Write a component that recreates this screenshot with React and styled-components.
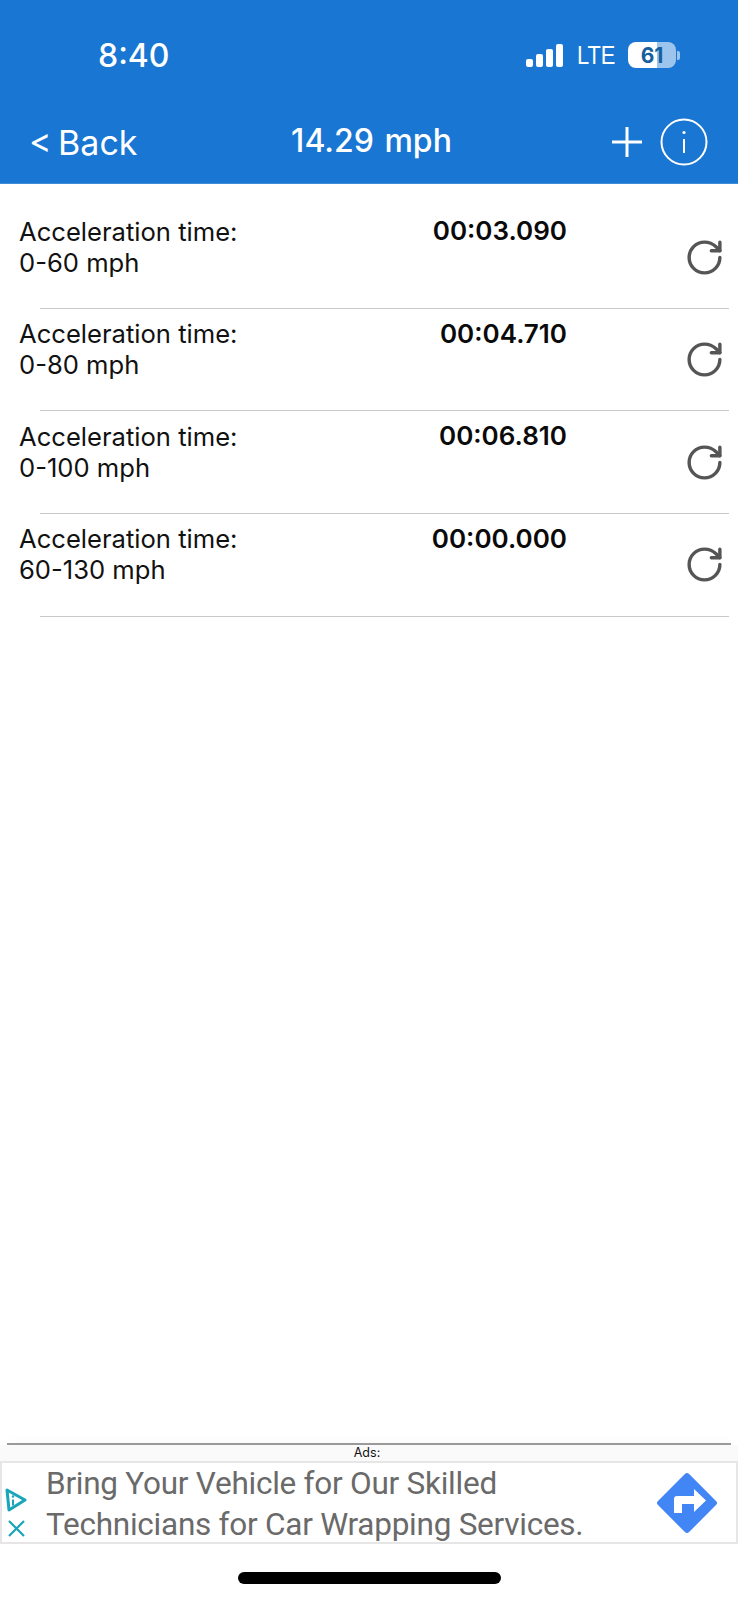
import React from 'react';
import styled, { createGlobalStyle } from 'styled-components';
import { RotateCw } from 'lucide-react';

const GlobalStyle = createGlobalStyle`
  html, body {
    margin: 0;
    padding: 0;
    background: #fff;
  }
  * {
    box-sizing: border-box;
  }
`;

const Page = styled.div`
  width: 738px;
  height: 1600px;
  display: flex;
  flex-direction: column;
  font-family: Inter, "Liberation Sans", sans-serif;
  background: #fff;
  overflow: hidden;
`;

const Header = styled.header`
  height: 184px;
  background: #1976d3;
  color: #fff;
  border-bottom: 1px solid #3c8ed8;
  flex-shrink: 0;
`;

const StatusBar = styled.div`
  height: 110px;
  padding: 0 58px 0 98px;
  display: flex;
  align-items: center;
  justify-content: space-between;
`;

const Time = styled.span`
  font-size: 32px;
  font-weight: 500;
`;

const StatusIcons = styled.div`
  display: flex;
  align-items: center;
`;

const SignalBars = styled.div`
  display: flex;
  align-items: flex-end;
  gap: 3px;
  height: 23px;
  margin-right: 14px;
`;

const SignalBar = styled.span`
  width: 7px;
  height: ${(p) => p.$h}px;
  background: #fff;
  border-radius: 2px;
`;

const Network = styled.span`
  font-family: "Liberation Sans", sans-serif;
  font-size: 26px;
  transform: scaleX(0.84);
  transform-origin: left center;
  width: 51px;
`;

const Battery = styled.div`
  width: 48px;
  height: 26px;
  border-radius: 8px;
  display: flex;
  align-items: center;
  justify-content: center;
  color: #14609f;
  font-size: 21px;
  font-weight: 700;
  background: linear-gradient(
    to right,
    #fff ${(p) => p.$level}%,
    #9cc4ec ${(p) => p.$level}%
  );
`;

const BatteryNub = styled.span`
  width: 3px;
  height: 9px;
  margin-left: 1px;
  background: #9cc4ec;
  border-radius: 0 2px 2px 0;
`;

const NavBar = styled.nav`
  height: 73px;
  padding: 0 30px 10px 29px;
  display: grid;
  grid-template-columns: 1fr auto 1fr;
  align-items: center;
`;

const BackLink = styled.span`
  font-size: 34px;
  font-weight: 400;
  word-spacing: -3px;
  margin-top: 2px;
`;

const Title = styled.span`
  font-size: 32px;
  font-weight: 500;
  word-spacing: 2px;
  margin-left: 6px;
  margin-top: -2px;
`;

const NavActions = styled.div`
  display: flex;
  align-items: center;
  justify-content: flex-end;
  gap: 17px;
`;

const List = styled.main`
  padding-top: 22px;
`;

const Row = styled.section`
  height: 101.67px;
  display: grid;
  grid-template-columns: 290px 258px 1fr;
  padding-left: 19px;
  padding-right: 13px;
`;

const Label = styled.div`
  font-size: 25.6px;
  line-height: 31px;
  color: #111;
  padding-top: 9.5px;
  white-space: nowrap;
`;

const Value = styled.div`
  font-size: 26px;
  line-height: 31px;
  font-weight: 600;
  color: #0a0a0a;
  text-align: right;
  padding-top: 9px;
`;

const ResetButton = styled.div`
  display: flex;
  justify-content: flex-end;
  padding-top: 30.5px;
  color: #555;
`;

const Divider = styled.div`
  height: 1px;
  margin: 0 9px 0 40px;
  background: #c8c8c8;
`;

const AdSection = styled.footer`
  margin-top: auto;
  flex-shrink: 0;
`;

const AdRule = styled.div`
  height: 2px;
  margin: 0 7px;
  background: #9a9a9a;
  box-shadow: 0 -2px 10px rgba(0, 0, 0, 0.07);
`;

const AdCaption = styled.div`
  height: 16px;
  font-size: 12.5px;
  line-height: 16px;
  text-align: center;
  color: #111;
  padding-right: 4px;
  background: #fafafa;
`;

const AdBox = styled.div`
  height: 83px;
  display: flex;
  align-items: center;
  border: 2px solid #e6e6e6;
  background: #fff;
`;

const AdMarks = styled.div`
  width: 44px;
  align-self: stretch;
  display: flex;
  flex-direction: column;
  align-items: center;
  justify-content: flex-end;
  gap: 8px;
  padding: 0 16px 5px 0;
  flex-shrink: 0;
`;

const AdText = styled.div`
  flex: 1;
  font-family: Roboto, sans-serif;
  font-size: 31.5px;
  font-weight: 400;
  letter-spacing: -0.25px;
  line-height: 41px;
  padding-top: 2px;
  color: #6a6a6a;
  white-space: nowrap;
`;

const AdAction = styled.div`
  width: 81px;
  display: flex;
  flex-shrink: 0;
`;

const HomeArea = styled.div`
  height: 56px;
  display: flex;
  justify-content: center;
  padding-top: 28px;
`;

const HomeBar = styled.div`
  width: 263px;
  height: 12px;
  border-radius: 6px;
  background: #000;
`;

const PlusIcon = () => (
  <svg width="32" height="32" viewBox="0 0 32 32">
    <path d="M1 16h30M16 1v30" stroke="#fff" strokeWidth="3" fill="none" />
  </svg>
);

const InfoIcon = () => (
  <svg width="48" height="48" viewBox="0 0 48 48" fill="none">
    <circle cx="24" cy="24" r="22.5" stroke="#fff" strokeWidth="2" />
    <path d="M24 21v14" stroke="#fff" strokeWidth="2" />
    <circle cx="24" cy="14.5" r="1.6" fill="#fff" />
  </svg>
);

const AdChoicesIcon = () => (
  <svg width="22" height="24" viewBox="0 0 22 24" fill="none">
    <path d="M2 2l18 10L4 22z" stroke="#1ba5b8" strokeWidth="3" strokeLinejoin="round" />
    <path d="M8 11.5v6" stroke="#1ba5b8" strokeWidth="2" />
    <circle cx="8" cy="8.5" r="1.2" fill="#1ba5b8" />
  </svg>
);

const AdCloseIcon = () => (
  <svg width="17" height="17" viewBox="0 0 17 17">
    <path d="M1 1l15 15M16 1L1 16" stroke="#1ba5b8" strokeWidth="2.2" fill="none" />
  </svg>
);

const DirectionsIcon = () => (
  <svg width="64" height="64" viewBox="0 0 64 64">
    <rect x="10" y="10" width="44" height="44" rx="3" fill="#4285f4" transform="rotate(45 32 32)" />
    <path
      d="M19 42V28a3 3 0 0 1 3-3h17v-7l12 11.5L39 41v-8H27v9z"
      fill="#fff"
    />
  </svg>
);

const rows = [
  { range: '0-60 mph', time: '00:03.090' },
  { range: '0-80 mph', time: '00:04.710' },
  { range: '0-100 mph', time: '00:06.810' },
  { range: '60-130 mph', time: '00:00.000' },
];

const App = () => (
  <Page>
    <GlobalStyle />
    <Header>
      <StatusBar>
        <Time>8:40</Time>
        <StatusIcons>
          <SignalBars>
            {[8, 13, 18, 23].map((h) => (
              <SignalBar key={h} $h={h} />
            ))}
          </SignalBars>
          <Network>LTE</Network>
          <Battery $level={61}>61</Battery>
          <BatteryNub />
        </StatusIcons>
      </StatusBar>
      <NavBar>
        <BackLink>&lt; Back</BackLink>
        <Title>14.29 mph</Title>
        <NavActions>
          <PlusIcon />
          <InfoIcon />
        </NavActions>
      </NavBar>
    </Header>
    <List>
      {rows.map((row) => (
        <React.Fragment key={row.range}>
          <Row>
            <Label>
              Acceleration time:
              <br />
              {row.range}
            </Label>
            <Value>{row.time}</Value>
            <ResetButton>
              <RotateCw size={41} strokeWidth={2} />
            </ResetButton>
          </Row>
          <Divider />
        </React.Fragment>
      ))}
    </List>
    <AdSection>
      <AdRule />
      <AdCaption>Ads:</AdCaption>
      <AdBox>
        <AdMarks>
          <AdChoicesIcon />
          <AdCloseIcon />
        </AdMarks>
        <AdText>
          Bring Your Vehicle for Our Skilled
          <br />
          Technicians for Car Wrapping Services.
        </AdText>
        <AdAction>
          <DirectionsIcon />
        </AdAction>
      </AdBox>
      <HomeArea>
        <HomeBar />
      </HomeArea>
    </AdSection>
  </Page>
);

export default App;
